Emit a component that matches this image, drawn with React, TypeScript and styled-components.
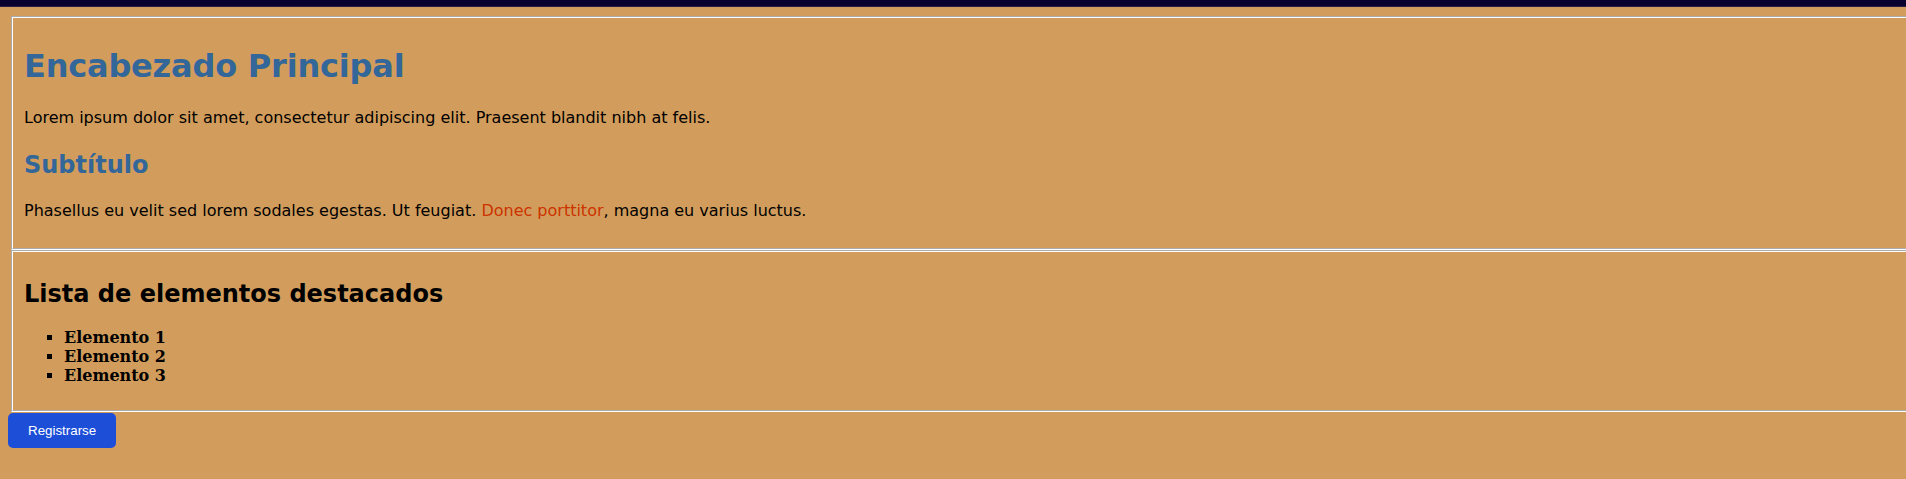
import React from "react";
import styled, { createGlobalStyle } from "styled-components";

const GlobalStyle = createGlobalStyle`
  html, body {
    margin: 0;
    padding: 0;
    overflow: hidden;
    background: #d29d5c;
  }
  body {
    font-family: "DejaVu Sans", Verdana, sans-serif;
    color: #000;
  }
`;

const TopBar = styled.div`
  height: 7px;
  background: #0a0030;
  border-bottom: 1px solid #2a1d4a;
  box-sizing: border-box;
`;

const Page = styled.main`
  padding: 9px 0 0 8px;
`;

const Section = styled.section`
  margin-left: 3px;
  width: 100%;
  border: 2px groove #ffffff;
  padding: 8px 11px;
`;

const Title = styled.h1`
  font-size: 32px;
  font-weight: bold;
  color: #336699;
  margin: 21px 0 22.6px;
  line-height: normal;
  letter-spacing: -0.2px;
`;

const Subtitle = styled.h2<{ $dark?: boolean }>`
  font-size: 24px;
  font-weight: bold;
  color: ${(p) => (p.$dark ? "#000" : "#336699")};
  margin: ${(p) => (p.$dark ? "19.9px 0 19.9px" : "24.9px 0 21.8px")};
  line-height: normal;
`;

const Text = styled.p<{ $last?: boolean }>`
  font-size: 16px;
  margin: 0 0 ${(p) => (p.$last ? "20.2px" : "0")};
  line-height: normal;
`;

const Link = styled.a`
  color: #cc3300;
  text-decoration: none;
`;

const List = styled.ul`
  list-style: square;
  margin: 0 0 17px;
  padding-left: 40px;
`;

const Item = styled.li`
  font-family: "DejaVu Serif", "Liberation Serif", serif;
  font-weight: bold;
  font-size: 16px;
  line-height: 19px;
`;

const Button = styled.button`
  display: block;
  margin-top: 1px;
  background: #1d4ed8;
  color: #fff;
  border: none;
  border-radius: 5px;
  padding: 10px 20px;
  font-family: "Liberation Sans", Arial, sans-serif;
  font-size: 13.333px;
  cursor: pointer;
`;

export default function App() {
  return (
    <>
      <GlobalStyle />
      <TopBar />
      <Page>
        <Section>
          <Title>Encabezado Principal</Title>
          <Text>
            Lorem ipsum dolor sit amet, consectetur adipiscing elit. Praesent blandit nibh at felis.
          </Text>
          <Subtitle>Subtítulo</Subtitle>
          <Text $last>
            Phasellus eu velit sed lorem sodales egestas. Ut feugiat.{" "}
            <Link href="#">Donec porttitor</Link>, magna eu varius luctus.
          </Text>
        </Section>
        <Section>
          <Subtitle $dark>Lista de elementos destacados</Subtitle>
          <List>
            <Item>Elemento 1</Item>
            <Item>Elemento 2</Item>
            <Item>Elemento 3</Item>
          </List>
        </Section>
        <Button>Registrarse</Button>
      </Page>
    </>
  );
}
